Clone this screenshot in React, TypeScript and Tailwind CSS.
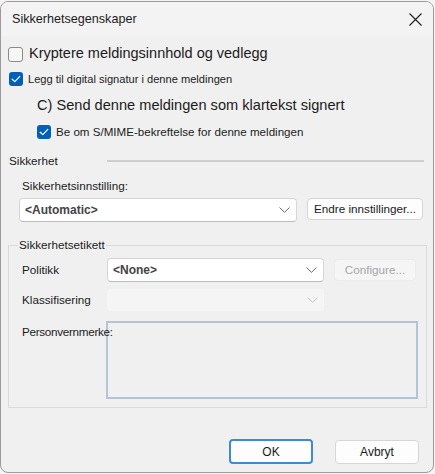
import React from "react";

function Box({ checked, size = 14 }: { checked: boolean; size?: number }) {
  if (checked) {
    return (
      <span
        className="flex items-center justify-center rounded-[3px] bg-[#005fb8] shrink-0"
        style={{ width: size, height: size }}
      >
        <svg width="10" height="8" viewBox="0 0 10 8" fill="none">
          <path d="M1.2 4.2 L3.8 6.6 L8.8 1.4" stroke="#ffffff" strokeWidth="1.2" strokeLinecap="round" strokeLinejoin="round" />
        </svg>
      </span>
    );
  }
  return (
    <span
      className="rounded-[3px] border border-[#8a8a8a] bg-[#f6f6f6] shrink-0"
      style={{ width: size, height: size }}
    />
  );
}

function Chevron({ color = "#6b6b6b" }: { color?: string }) {
  return (
    <svg width="11" height="6" viewBox="0 0 11 6" fill="none">
      <path d="M0.5 0.5 L5.5 5.3 L10.5 0.5" stroke={color} strokeWidth="1" />
    </svg>
  );
}

export default function App() {
  return (
    <div className="min-h-screen bg-[#f4f4f4] pt-[1px] font-['Liberation_Sans',Arial,sans-serif] text-[#1b1b1b]">
      <div className="w-[434px] h-[472px] rounded-[8px] border border-[#9c9c9c] bg-[#f0f0f0] flex flex-col overflow-hidden">
        {/* title bar */}
        <div className="h-[34px] bg-[#f3f3f3] flex items-center justify-between pl-[11px] pr-[11px] shrink-0">
          <span className="text-[12.6px]">Sikkerhetsegenskaper</span>
          <svg width="13" height="13" viewBox="0 0 13 13" fill="none">
            <path d="M0.5 0.5 L12.5 12.5 M12.5 0.5 L0.5 12.5" stroke="#1f1f1f" strokeWidth="1.1" />
          </svg>
        </div>

        <div className="mt-[8px] h-[20px] flex items-center pl-[7px]">
          <Box checked={false} size={15} />
          <span className="ml-[6px] text-[14.5px]">Kryptere meldingsinnhold og vedlegg</span>
        </div>

        <div className="mt-[6px] h-[18px] flex items-center pl-[8px]">
          <Box checked />
          <span className="ml-[5px] text-[11.1px]">Legg til digital signatur i denne meldingen</span>
        </div>

        <div className="mt-[8px] h-[20px] flex items-center pl-[36px] text-[14.6px]">
          C) Send denne meldingen som klartekst signert
        </div>

        <div className="mt-[7px] h-[18px] flex items-center pl-[36px]">
          <Box checked />
          <span className="ml-[5px] text-[11.6px]">Be om S/MIME-bekreftelse for denne meldingen</span>
        </div>

        <div className="mt-[11px] h-[18px] flex items-center pl-[8px] pr-[9px]">
          <span className="text-[11.7px]">Sikkerhet</span>
          <span className="ml-auto w-[317px] h-[2px] bg-[#cfcfcf]" />
        </div>

        <div className="mt-[7px] h-[18px] flex items-center pl-[21px] text-[11.7px]">
          Sikkerhetsinnstilling:
        </div>

        <div className="mt-[3px] flex items-start pl-[18px]">
          <div className="w-[278px] h-[24px] rounded-[4px] border border-[#d6d6d6] border-b-[#bcbcbc] bg-white flex items-center justify-between pl-[5px] pr-[6px]">
            <span className="text-[12px] font-bold text-[#444]">&lt;Automatic&gt;</span>
            <Chevron />
          </div>
          <div className="ml-[10px] w-[116px] h-[22px] rounded-[4px] border border-[#d6d6d6] bg-[#fdfdfd] flex items-center justify-center text-[11.7px]">
            Endre innstillinger...
          </div>
        </div>

        {/* Sikkerhetsetikett group */}
        <div className="relative mt-[23px] ml-[7px] w-[419px] h-[163px] border border-[#dadada] shrink-0">
          <span className="absolute left-[9px] top-[-8px] px-[1px] bg-[#f0f0f0] text-[11.7px] leading-[14px]">
            Sikkerhetsetikett
          </span>

          <div className="mt-[12px] h-[24px] flex items-center">
            <span className="w-[98px] pl-[13px] text-[11.7px]">Politikk</span>
            <div className="w-[217px] h-[24px] rounded-[4px] border border-[#d6d6d6] border-b-[#bcbcbc] bg-white flex items-center justify-between pl-[5px] pr-[6px]">
              <span className="text-[12px] font-bold text-[#444]">&lt;None&gt;</span>
              <Chevron />
            </div>
            <div className="ml-[10px] w-[82px] h-[22px] rounded-[4px] border border-[#ececec] bg-[#f5f5f5] flex items-center justify-center text-[11.7px] text-[#a6a6a6]">
              Configure...
            </div>
          </div>

          <div className="mt-[7px] h-[22px] flex items-center">
            <span className="w-[98px] pl-[13px] text-[11.7px]">Klassifisering</span>
            <div className="w-[217px] h-[22px] rounded-[3px] bg-[#f5f5f5] flex items-center justify-end pr-[6px]">
              <Chevron color="#c4c4c4" />
            </div>
          </div>

          <div className="mt-[10px] flex items-start">
            <span className="relative z-10 w-[97px] pl-[13px] pt-[2px] text-[11.7px] whitespace-nowrap tracking-[-0.3px]">
              Personvernmerke:
            </span>
            <div className="w-[312px] h-[78px] border-2 border-[#b4c3d8] bg-[#f0f0f0]" />
          </div>
        </div>

        <div className="mt-[31px] flex justify-end pr-[14px] gap-[22px]">
          <div className="w-[84px] h-[25px] rounded-[4px] border-2 border-[#3c8ad8] bg-[#fdfdfd] flex items-center justify-center text-[12px]">
            OK
          </div>
          <div className="w-[84px] h-[24px] mt-[1px] rounded-[4px] border border-[#d6d6d6] bg-[#fdfdfd] flex items-center justify-center text-[12px]">
            Avbryt
          </div>
        </div>
      </div>
    </div>
  );
}
